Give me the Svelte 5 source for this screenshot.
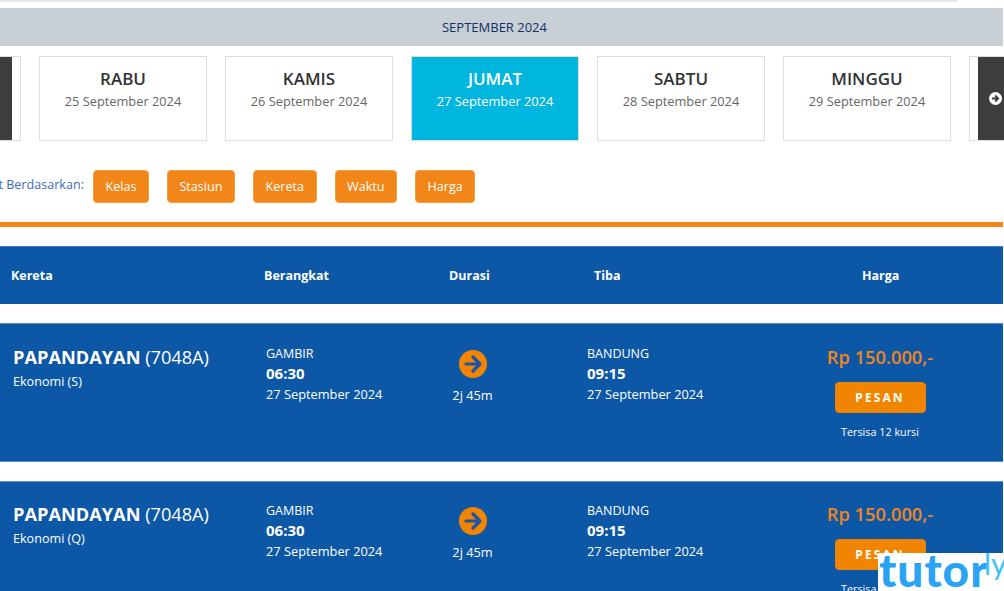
<script>
	const days = [
		{ name: "SELASA", date: "24 September 2024", edge: "prev" },
		{ name: "RABU", date: "25 September 2024" },
		{ name: "KAMIS", date: "26 September 2024" },
		{ name: "JUMAT", date: "27 September 2024", active: true },
		{ name: "SABTU", date: "28 September 2024" },
		{ name: "MINGGU", date: "29 September 2024" },
		{ name: "", date: "", edge: "next" }
	]
	const filters = ["Kelas", "Stasiun", "Kereta", "Waktu", "Harga"]
	const trains = [
		{ name: "PAPANDAYAN", code: "(7048A)", kelas: "Ekonomi (S)", seats: "Tersisa 12 kursi" },
		{ name: "PAPANDAYAN", code: "(7048A)", kelas: "Ekonomi (Q)", seats: "Tersisa 12 kursi" }
	]
</script>

<div class="page">
	<div class="search-edge"></div>
	<div class="month">SEPTEMBER 2024</div>

	<div class="days">
		{#each days as day}
			{#if day.edge === "prev"}
				<div class="day day--prev"><div class="day__nav"></div></div>
			{:else if day.edge === "next"}
				<div class="day day--next">
					<div class="day__nav">
						<svg width="13" height="13" viewBox="0 0 24 24">
							<circle cx="12" cy="12" r="12" fill="#fff" />
							<path d="M5.5 12h11M11.5 6.5l5.5 5.5-5.5 5.5" fill="none" stroke="#3d3d3d" stroke-width="3.4" />
						</svg>
					</div>
				</div>
			{:else}
				<div class="day" class:day--active={day.active}>
					<div class="day__name">{day.name}</div>
					<div class="day__date">{day.date}</div>
				</div>
			{/if}
		{/each}
	</div>

	<div class="filters">
		<div class="filters__label"><span>Urut Berdasarkan:</span></div>
		{#each filters as f}
			<button class="filter">{f}</button>
		{/each}
	</div>

	<div class="rule"></div>

	<div class="thead">
		<span class="th th--kereta">Kereta</span>
		<span class="th th--berangkat">Berangkat</span>
		<span class="th th--durasi">Durasi</span>
		<span class="th th--tiba">Tiba</span>
		<span class="th th--harga">Harga</span>
	</div>

	{#each trains as t, i}
		<div class="train" class:train--next={i > 0}>
			<div class="train__info">
				<div class="train__name"><b>{t.name}</b> {t.code}</div>
				<div class="train__class">{t.kelas}</div>
			</div>
			<div class="stop">
				<div class="stop__place">GAMBIR</div>
				<div class="stop__time">06:30</div>
				<div class="stop__date">27 September 2024</div>
			</div>
			<div class="duration">
				<svg width="28" height="28" viewBox="0 0 28 28">
					<circle cx="14" cy="14" r="14" fill="#f28500" />
					<path d="M7 14h14M14 7l7 7-7 7" fill="none" stroke="#1c55a8" stroke-width="3.2" stroke-linecap="round" stroke-linejoin="round" />
				</svg>
				<div class="duration__text">2j 45m</div>
			</div>
			<div class="stop stop--arrive">
				<div class="stop__place">BANDUNG</div>
				<div class="stop__time">09:15</div>
				<div class="stop__date">27 September 2024</div>
			</div>
			<div class="buy">
				<div class="buy__price">Rp 150.000,-</div>
				<button class="buy__btn">PESAN</button>
				<div class="buy__seats">{t.seats}</div>
			</div>
		</div>
	{/each}

	<div class="watermark"><span class="watermark__tutor">tutor</span><span class="watermark__ly">ly</span></div>
</div>

<style>
	:global(body) {
		margin: 0;
		background: #fff;
		overflow: hidden;
	}

	.page {
		position: relative;
		width: 1004px;
		height: 591px;
		overflow: hidden;
		padding-right: 1px;
		box-sizing: border-box;
		font-family: "Open Sans", "Noto Sans", sans-serif;
		color: #333;
	}

	.search-edge {
		width: 958px;
		height: 2px;
		background: #e6e6e6;
		border-bottom-right-radius: 4px;
		margin-bottom: 6px;
	}

	.month {
		height: 38px;
		line-height: 38px;
		padding-right: 14px;
		background: #c8d0d6;
		color: #0f2f66;
		font-size: 13px;
		text-align: center;
	}

	.days {
		display: flex;
		gap: 18px;
		margin: 10px 0 29px -147px;
	}

	.day {
		flex: 0 0 168px;
		height: 85px;
		box-sizing: border-box;
		border: 1px solid #ddd;
		text-align: center;
		padding-top: 11px;
	}

	.day--prev,
	.day--next {
		padding: 0;
		display: flex;
	}

	.day--prev .day__nav {
		width: 158px;
		flex: none;
	}

	.day--next {
		padding-left: 8px;
	}

	.day__nav {
		box-sizing: border-box;
		background: #3d3d3d;
		width: 100%;
		display: flex;
		align-items: center;
		padding-left: 11px;
	}

	.day__name {
		font-size: 17px;
		font-weight: 600;
		line-height: 22px;
	}

	.day__date {
		font-size: 12.8px;
		line-height: 22px;
		color: #666;
	}

	.day--active {
		background: #00b5de;
		color: #fff;
		border-color: #ddd;
	}

	.day--active .day__date {
		color: #fff;
	}

	.filters {
		display: flex;
		align-items: center;
		gap: 18px;
		height: 33px;
	}

	.filters__label {
		flex: 0 0 84px;
		min-width: 0;
		display: flex;
		justify-content: flex-end;
		white-space: nowrap;
		font-size: 12.6px;
		color: #3c6eb4;
		margin-right: -9px;
		padding-bottom: 4px;
	}

	.filter {
		height: 33px;
		padding: 0 11.5px;
		border: 1px solid #f5a040;
		border-radius: 4px;
		background: #f28619;
		color: #fff;
		font: 12.6px "Open Sans", sans-serif;
	}

	.rule {
		height: 5px;
		background: #f28619;
		margin: 19px 0;
	}

	.thead {
		display: flex;
		align-items: center;
		height: 58px;
		background: #0c57a6;
		border-top: 1px solid #3f7cc0;
		box-sizing: border-box;
		color: #fff;
		font-size: 12.5px;
		font-weight: 700;
	}

	.th--kereta { margin-left: 11px; width: 253px; }
	.th--berangkat { width: 185px; }
	.th--durasi { width: 145px; }
	.th--tiba { width: 268px; }

	.train {
		display: flex;
		height: 139px;
		margin-top: 19px;
		background: #0c57a6;
		color: #fff;
		box-sizing: border-box;
		padding-top: 20px;
		border-top: 1px solid #5b8fc9;
		border-bottom: 1px solid #5b8fc9;
	}

	.train--next {
		padding-top: 19px;
	}

	.train__info {
		width: 266px;
		padding-left: 13px;
		box-sizing: border-box;
	}

	.train__name {
		font-size: 18.2px;
		line-height: 26px;
	}

	.train__class {
		font-size: 12.6px;
		line-height: 20px;
		margin-top: 2px;
	}

	.stop {
		width: 170px;
		font-size: 12.8px;
		line-height: 20px;
	}

	.stop--arrive {
		width: 214px;
	}

	.stop__place {
		font-size: 12.5px;
	}

	.stop__time {
		font-size: 15px;
		font-weight: 700;
		margin-top: -1px;
		margin-bottom: 1px;
	}

	.duration {
		width: 151px;
		padding-right: 78px;
		box-sizing: border-box;
		text-align: center;
		font-size: 12.8px;
		margin-top: 6px;
	}

	.duration__text {
		margin-top: 4px;
		white-space: nowrap;
	}

	.buy {
		width: 158px;
		text-align: center;
	}

	.buy__price {
		color: #f28619;
		font-size: 18.3px;
		font-weight: 600;
		line-height: 26px;
	}

	.buy__btn {
		display: block;
		width: 91px;
		height: 31px;
		margin: 12px auto 0;
		background: #f28500;
		border: 1px solid #e98200;
		border-radius: 4px;
		color: #fff;
		font: 700 12px "Open Sans", sans-serif;
		letter-spacing: 2.1px;
	}

	.buy__seats {
		font-size: 10.8px;
		margin-top: 11px;
	}

	.watermark {
		position: absolute;
		left: 878px;
		top: 553px;
		width: 126px;
		height: 38px;
		background: #fff;
		white-space: nowrap;
		line-height: 34px;
		overflow: hidden;
	}

	.watermark__tutor {
		font: 900 46px/34px Lato, sans-serif;
		color: #2aa3f5;
		letter-spacing: 1px;
		display: block;
		padding-left: 1px;
	}

	.watermark__ly {
		font: 400 30px/30px Lato, sans-serif;
		color: #3fc4f5;
		position: absolute;
		left: 106px;
		top: -5px;
	}
</style>
